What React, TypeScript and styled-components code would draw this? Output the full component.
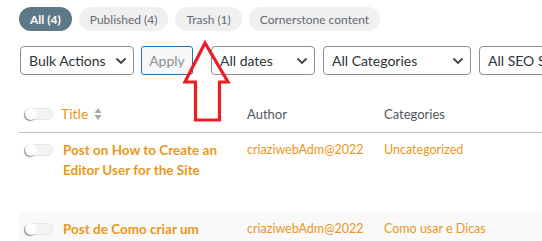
import React from "react";
import styled, { createGlobalStyle } from "styled-components";

const GlobalStyle = createGlobalStyle`
  html, body {
    margin: 0;
    padding: 0;
    background: #fff;
    overflow: hidden;
  }
  body {
    font-family: Lato, "Liberation Sans", sans-serif;
  }
`;

const Page = styled.div`
  position: relative;
  width: 542px;
  height: 241px;
  overflow: hidden;
  padding-left: 19px;
  box-sizing: border-box;
`;

const Pills = styled.div`
  display: flex;
  gap: 7px;
  padding-top: 7px;
`;

const Pill = styled.div<{ $active?: boolean }>`
  height: 24px;
  padding: 0 11px;
  border-radius: 12px;
  display: flex;
  align-items: center;
  font-size: 12px;
  white-space: nowrap;
  background: ${(p) => (p.$active ? "#5d7887" : "#f0f0f1")};
  color: ${(p) => (p.$active ? "#fff" : "#646970")};
  font-weight: ${(p) => (p.$active ? 700 : 400)};
`;

const Filters = styled.div`
  display: flex;
  align-items: center;
  margin-top: 15px;
  margin-left: 1px;
  white-space: nowrap;
`;

const Select = styled.div<{ $w: number; $gap?: number }>`
  flex: none;
  width: ${(p) => p.$w}px;
  height: 29px;
  margin-left: ${(p) => p.$gap ?? 0}px;
  box-sizing: border-box;
  border: 1px solid #8c8f94;
  border-radius: 4px;
  display: flex;
  align-items: center;
  justify-content: space-between;
  padding: 0 6px 0 8px;
  font-size: 14px;
  color: #2c3338;
  background: #fff;
`;

const ApplyButton = styled.div`
  flex: none;
  width: 52px;
  height: 29px;
  margin-left: 7px;
  box-sizing: border-box;
  border: 1px solid #2271b1;
  border-radius: 3px;
  background: #f6f7f7;
  color: #8c8f94;
  font-size: 14px;
  display: flex;
  align-items: center;
  justify-content: center;
`;

const Table = styled.div`
  margin-top: 20px;
  width: 620px;
`;

const HeadRow = styled.div`
  display: grid;
  grid-template-columns: 42px 186px 137px 1fr;
  align-items: center;
  height: 37px;
  border-bottom: 1px solid #c3c4c7;
  font-size: 13px;
  color: #50575e;
`;

const Row = styled.div<{ $alt?: boolean }>`
  display: grid;
  grid-template-columns: 44px 184px 137px 1fr;
  align-items: start;
  height: ${(p) => (p.$alt ? 40 : 79)}px;
  box-sizing: border-box;
  padding-top: 7px;
  background: ${(p) => (p.$alt ? "#f9f9f9" : "#fff")};
  font-size: 12.5px;
  color: #e8971e;
`;

const ToggleCell = styled.div`
  padding-left: 6px;
  display: flex;
  align-items: center;
  height: 20px;
`;

const Toggle = styled.span`
  display: block;
  position: relative;
  width: 28px;
  height: 12px;
  border-radius: 6px;
  background: #f3f3f3;
  box-shadow: inset 0 0 0 1px #e6e6e6;
  &::after {
    content: "";
    position: absolute;
    left: 0;
    top: 0;
    width: 12px;
    height: 12px;
    border-radius: 50%;
    background: #fff;
    box-shadow: -1px 1px 1px rgba(0, 0, 0, 0.45);
  }
`;

const TitleHead = styled.div`
  display: flex;
  align-items: center;
  gap: 6px;
  font-size: 14px;
  color: #e8971e;
`;

const PostTitle = styled.div`
  font-weight: 700;
  font-size: 13.5px;
  line-height: 20px;
  padding-right: 14px;
`;

const Cell = styled.div`
  line-height: 20px;
  white-space: nowrap;
`;

const Arrow = styled.svg`
  position: absolute;
  left: 182px;
  top: 40px;
`;

const Chevron = () => (
  <svg width="12" height="8" viewBox="0 0 12 8">
    <path d="M1.5 1.5 L6 6 L10.5 1.5" fill="none" stroke="#3c434a" strokeWidth="1.8" />
  </svg>
);

const SortIcon = () => (
  <svg width="8" height="14" viewBox="0 0 8 14">
    <path d="M0.5 6 L4 1 L7.5 6 Z" fill="#a7aaad" />
    <path d="M0.5 8 L4 13 L7.5 8 Z" fill="#a7aaad" />
  </svg>
);

export default function App() {
  return (
    <>
      <GlobalStyle />
      <Page>
        <Pills>
          <Pill $active>All (4)</Pill>
          <Pill>Published (4)</Pill>
          <Pill>Trash (1)</Pill>
          <Pill>Cornerstone content</Pill>
        </Pills>
        <Filters>
          <Select $w={114}>
            Bulk Actions <Chevron />
          </Select>
          <ApplyButton>Apply</ApplyButton>
          <Select $w={104} $gap={18}>
            All dates <Chevron />
          </Select>
          <Select $w={148} $gap={8}>
            All Categories <Chevron />
          </Select>
          <Select $w={140} $gap={8}>
            All SEO Scores <Chevron />
          </Select>
        </Filters>
        <Table>
          <HeadRow>
            <ToggleCell>
              <Toggle />
            </ToggleCell>
            <TitleHead>
              Title <SortIcon />
            </TitleHead>
            <div>Author</div>
            <div>Categories</div>
          </HeadRow>
          <Row>
            <ToggleCell>
              <Toggle />
            </ToggleCell>
            <PostTitle>Post on How to Create an Editor User for the Site</PostTitle>
            <Cell>criaziwebAdm@2022</Cell>
            <Cell>Uncategorized</Cell>
          </Row>
          <Row $alt>
            <ToggleCell>
              <Toggle />
            </ToggleCell>
            <PostTitle>Post de Como criar um</PostTitle>
            <Cell>criaziwebAdm@2022</Cell>
            <Cell>Como usar e Dicas</Cell>
          </Row>
        </Table>
        <Arrow width="50" height="84" viewBox="0 0 50 84">
          <path
            d="M23 3 L3 42 L13.5 42 L13.5 80 L37.5 80 L37.5 42 L46 42 Z"
            fill="none"
            stroke="#ec1c24"
            strokeWidth="3.2"
            strokeLinejoin="miter"
          />
        </Arrow>
      </Page>
    </>
  );
}
